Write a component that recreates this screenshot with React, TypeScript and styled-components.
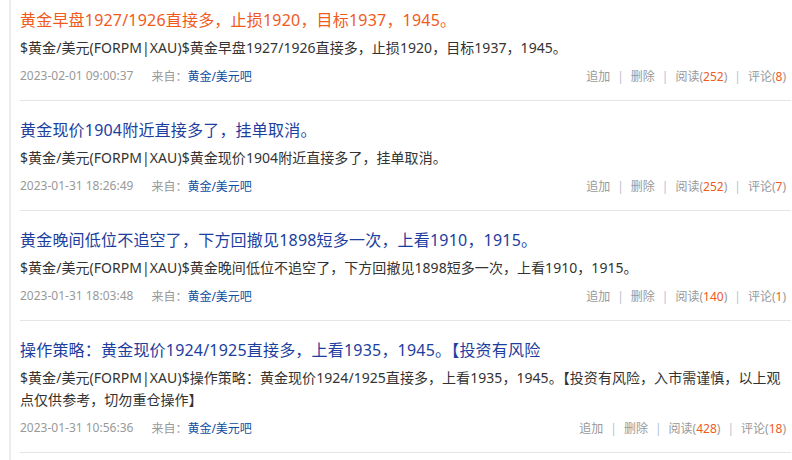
import React from "react";
import styled, { createGlobalStyle } from "styled-components";

const GlobalStyle = createGlobalStyle`
  html, body {
    margin: 0;
    padding: 0;
    background: #fff;
  }
  body {
    font-family: "Noto Sans", "Noto Sans CJK SC", sans-serif;
  }
`;

type Post = {
  title: string;
  body: string;
  time: string;
  reads: number;
  comments: number;
  active?: boolean;
};

const posts: Post[] = [
  {
    title: "黄金早盘1927/1926直接多，止损1920，目标1937，1945。",
    body: "$黄金/美元(FORPM|XAU)$黄金早盘1927/1926直接多，止损1920，目标1937，1945。",
    time: "2023-02-01 09:00:37",
    reads: 252,
    comments: 8,
    active: true,
  },
  {
    title: "黄金现价1904附近直接多了，挂单取消。",
    body: "$黄金/美元(FORPM|XAU)$黄金现价1904附近直接多了，挂单取消。",
    time: "2023-01-31 18:26:49",
    reads: 252,
    comments: 7,
  },
  {
    title: "黄金晚间低位不追空了，下方回撤见1898短多一次，上看1910，1915。",
    body: "$黄金/美元(FORPM|XAU)$黄金晚间低位不追空了，下方回撤见1898短多一次，上看1910，1915。",
    time: "2023-01-31 18:03:48",
    reads: 140,
    comments: 1,
  },
  {
    title: "操作策略：黄金现价1924/1925直接多，上看1935，1945。【投资有风险",
    body: "$黄金/美元(FORPM|XAU)$操作策略：黄金现价1924/1925直接多，上看1935，1945。【投资有风险，入市需谨慎，以上观点仅供参考，切勿重仓操作】",
    time: "2023-01-31 10:56:36",
    reads: 428,
    comments: 18,
  },
];

export default function App() {
  return (
    <>
      <GlobalStyle />
      <Feed>
        {posts.map((p, i) => (
          <Item key={i} $first={i === 0}>
            <Title $active={p.active}>{p.title}</Title>
            <Body>{p.body}</Body>
            <Meta>
              <Left>
                <span>{p.time}</span>
                <span>
                  来自：<SourceLink>黄金/美元吧</SourceLink>
                </span>
              </Left>
              <Actions>
                <span>追加</span>
                <Bar>|</Bar>
                <span>删除</span>
                <Bar>|</Bar>
                <span>
                  阅读(<Count>{p.reads}</Count>)
                </span>
                <Bar>|</Bar>
                <span>
                  评论(<Count>{p.comments}</Count>)
                </span>
              </Actions>
            </Meta>
          </Item>
        ))}
      </Feed>
    </>
  );
}

const Feed = styled.div`
  margin-left: 9px;
  border-left: 2px solid #ececec;
  min-height: 460px;
  box-sizing: border-box;
`;

const Item = styled.div<{ $first?: boolean }>`
  margin: 0 1px 0 9px;
  padding: ${(p) => (p.$first ? "9px" : "18px")} 5px 13px 0;
  border-bottom: 1px solid #e5e5e5;
`;

const Title = styled.a<{ $active?: boolean }>`
  display: block;
  font-size: 16px;
  line-height: 22px;
  letter-spacing: 0.2px;
  color: ${(p) => (p.$active ? "#f15a1b" : "#1c3e9e")};
  text-decoration: none;
  white-space: nowrap;
  overflow: hidden;
`;

const Body = styled.p`
  margin: 6px 0 0;
  font-size: 14px;
  line-height: 22px;
  letter-spacing: 0.05px;
  color: #333;
  word-break: break-all;
`;

const Meta = styled.div`
  margin-top: 6px;
  display: flex;
  justify-content: space-between;
  align-items: center;
  height: 22px;
  font-size: 12px;
  color: #999;
`;

const Left = styled.div`
  display: flex;
  gap: 18px;
`;

const SourceLink = styled.a`
  color: #0f4ea1;
  text-decoration: none;
`;

const Actions = styled.div`
  display: flex;
  align-items: center;
  font-size: 12px;
  color: #999;
`;

const Bar = styled.span`
  margin: 0 7px;
  color: #b4c0d4;
`;

const Count = styled.span`
  color: #f25a1c;
`;
